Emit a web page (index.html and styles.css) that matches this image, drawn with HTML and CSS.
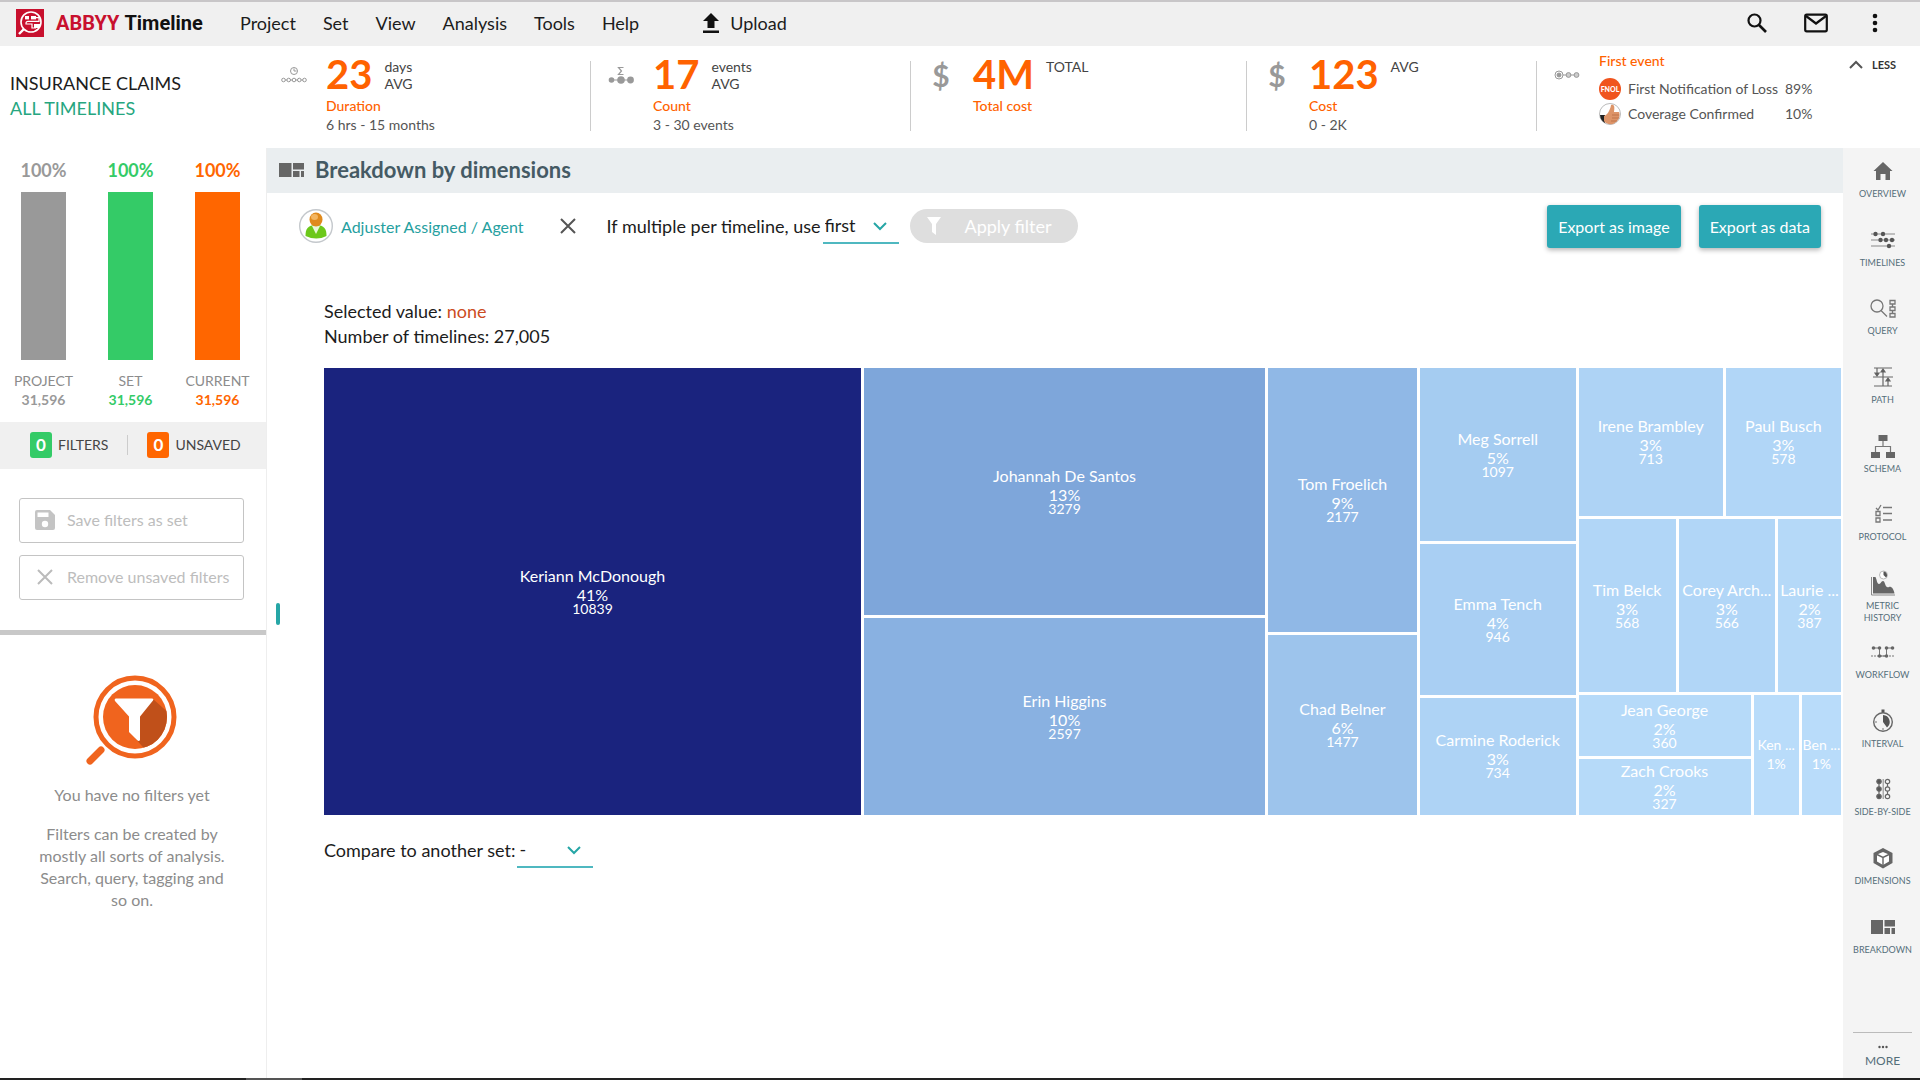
FILE: index.html
```html
<!DOCTYPE html>
<html lang="en">
<head>
<meta charset="utf-8">
<title>ABBYY Timeline</title>
<link rel="stylesheet" href="styles.css">
</head>
<body>
<div class="app">
  <header class="topbar">
    <a class="brand" href="#">
      <svg class="brand-mark" viewBox="0 0 28 28" aria-hidden="true"><rect width="28" height="28" fill="#c8102e"/><circle cx="15" cy="13" r="10" fill="none" stroke="#fff" stroke-width="1.6"/><path d="M8 20l-5 5" stroke="#fff" stroke-width="2.4"/><rect x="9" y="7" width="4" height="3.4" fill="#fff"/><rect x="15" y="7" width="5" height="3.4" fill="#fff"/><rect x="18" y="15" width="6" height="4" fill="#fff"/><path d="M20 8.700h3v3.600h-11q-2 0-2 2v.7h6v4h4" fill="none" stroke="#fff" stroke-width="1.200"/></svg>
      <span class="brand-name">ABBYY</span><span class="brand-product">Timeline</span>
    </a>
    <nav class="menu">
      <a href="#">Project</a><a href="#">Set</a><a href="#">View</a><a href="#">Analysis</a><a href="#">Tools</a><a href="#">Help</a>
    </nav>
    <button class="upload" type="button">
      <svg viewBox="0 0 16 20" width="16" height="20" aria-hidden="true"><path d="M8 0l8 8h-4.500v7h-7V8H0zM0 17.500h16V20H0z" fill="#111"/></svg>
      Upload
    </button>
    <div class="tools">
      <button type="button" aria-label="Search"><svg viewBox="0 0 20 20" width="20" height="20"><circle cx="7.500" cy="7.500" r="6" fill="none" stroke="#111" stroke-width="2.200"/><path d="M12 12l7 7" stroke="#111" stroke-width="2.600"/></svg></button>
      <button type="button" aria-label="Messages"><svg viewBox="0 0 24 20" width="24" height="20"><rect x="1.200" y="1.700" width="21.600" height="16.600" rx="1.500" fill="none" stroke="#111" stroke-width="2.200"/><path d="M2 3l10 7.500L22 3" fill="none" stroke="#111" stroke-width="2.200"/></svg></button>
      <button type="button" aria-label="More options"><svg viewBox="0 0 20 20" width="20" height="20" fill="#111"><circle cx="10" cy="3" r="2.300"/><circle cx="10" cy="10" r="2.300"/><circle cx="10" cy="17" r="2.300"/></svg></button>
    </div>
  </header>

  <section class="summary">
    <div class="scope">
      <div class="scope-project">INSURANCE CLAIMS</div>
      <a class="scope-set" href="#">ALL TIMELINES</a>
    </div>
    <div class="kpi">
      <svg class="kpi-icon" viewBox="0 0 28 28" aria-hidden="true" fill="none" stroke="#999"><circle cx="14" cy="10" r="3.500"/><path d="M14 7.500V10h2.500"/><path d="M2 19h24"/><g fill="#fff"><circle cx="3.500" cy="19" r="1.800"/><circle cx="8.700" cy="19" r="1.800"/><circle cx="14" cy="19" r="1.800"/><circle cx="19.300" cy="19" r="1.800"/><circle cx="24.500" cy="19" r="1.800"/></g></svg>
      <div class="kpi-body">
        <div class="kpi-head"><span class="kpi-value">23</span><span class="kpi-unit">days<br>AVG</span></div>
        <div class="kpi-name">Duration</div>
        <div class="kpi-range">6 hrs - 15 months</div>
      </div>
    </div>
    <div class="kpi">
      <svg class="kpi-icon" viewBox="0 0 28 28" aria-hidden="true" fill="#999"><path d="M16.500 6.500h-5l3 3.500-3 3.500h5" fill="none" stroke="#999" stroke-width="1.200"/><path d="M3 19h22" stroke="#999"/><circle cx="4.500" cy="19" r="2.800"/><circle cx="14" cy="19" r="3.800"/><circle cx="23.500" cy="19" r="3.400"/></svg>
      <div class="kpi-body">
        <div class="kpi-head"><span class="kpi-value">17</span><span class="kpi-unit">events<br>AVG</span></div>
        <div class="kpi-name">Count</div>
        <div class="kpi-range">3 - 30 events</div>
      </div>
    </div>
    <div class="kpi">
      <span class="kpi-icon kpi-dollar">$</span>
      <div class="kpi-body">
        <div class="kpi-head"><span class="kpi-value">4M</span><span class="kpi-unit">TOTAL</span></div>
        <div class="kpi-name">Total cost</div>
      </div>
    </div>
    <div class="kpi">
      <span class="kpi-icon kpi-dollar">$</span>
      <div class="kpi-body">
        <div class="kpi-head"><span class="kpi-value">123</span><span class="kpi-unit">AVG</span></div>
        <div class="kpi-name">Cost</div>
        <div class="kpi-range">0 - 2K</div>
      </div>
    </div>
    <div class="kpi kpi-events">
      <svg class="kpi-icon" viewBox="0 0 28 28" aria-hidden="true" fill="#999" stroke="#999"><circle cx="6" cy="18" r="4" fill="none"/><circle cx="6" cy="18" r="2"/><path d="M10 18h15"/><circle cx="15.500" cy="18" r="2.400" fill="#ccc"/><circle cx="23.500" cy="18" r="2.400" fill="#ccc"/></svg>
      <div class="kpi-body">
        <div class="kpi-name">First event</div>
        <div class="event"><span class="event-badge">FNOL</span><span class="event-name">First Notification of Loss</span><span>89%</span></div>
        <div class="event"><svg class="event-pic" viewBox="0 0 22 22" aria-hidden="true"><circle cx="11" cy="11" r="10.500" fill="#fff" stroke="#bbb"/><path d="M1 12h5v8A10 10 0 0 1 1 12z" fill="#222"/><path d="M5 13c3-1 6-5 7-11 3-1 4 1 3 7h5c2 4-1 10-6 12-4 1-8-1-9-3z" fill="#dd9468"/><path d="M13 12h7M13 15h7M12 18h6" stroke="#b96c44" stroke-width=".8"/></svg><span class="event-name">Coverage Confirmed</span><span>10%</span></div>
      </div>
    </div>
    <button class="less" type="button"><svg viewBox="0 0 14 9" width="14" height="9" aria-hidden="true"><path d="M1 8l6-6 6 6" fill="none" stroke="#555" stroke-width="2"/></svg>LESS</button>
  </section>

  <div class="body">
    <aside class="sidebar">
      <div class="bars">
        <div class="bar bar-project"><b class="bar-pct">100%</b><i class="bar-fill"></i><span>PROJECT</span><b>31,596</b></div>
        <div class="bar bar-set"><b class="bar-pct">100%</b><i class="bar-fill"></i><span>SET</span><b>31,596</b></div>
        <div class="bar bar-current"><b class="bar-pct">100%</b><i class="bar-fill"></i><span>CURRENT</span><b>31,596</b></div>
      </div>
      <div class="counts">
        <div class="count"><b class="count-badge green">0</b>FILTERS</div>
        <div class="count"><b class="count-badge orange">0</b>UNSAVED</div>
      </div>
      <div class="actions">
        <button type="button" disabled><svg viewBox="0 0 20 20" width="20" height="20" aria-hidden="true"><path d="M2 0h13l5 5v13a2 2 0 0 1-2 2H2a2 2 0 0 1-2-2V2a2 2 0 0 1 2-2z" fill="#c4c4c4"/><path d="M2.500 2.500h11v4.500h-11z" fill="#fff"/><circle cx="10" cy="14" r="3.200" fill="#fff"/></svg>Save filters as set</button>
        <button type="button" disabled><svg viewBox="0 0 20 20" width="20" height="20" aria-hidden="true"><path d="M3 3l14 14M17 3L3 17" stroke="#bbb" stroke-width="2"/></svg>Remove unsaved filters</button>
      </div>
      <div class="empty">
        <svg viewBox="0 0 92 92" width="92" height="92" aria-hidden="true"><defs><clipPath id="lens"><circle cx="49" cy="42" r="32"/></clipPath></defs><circle cx="49" cy="42" r="39" fill="#fff" stroke="#f0641e" stroke-width="5"/><circle cx="49" cy="42" r="32" fill="#f0641e"/><path clip-path="url(#lens)" d="M67 24l20 18v36H62L49 63l5-21z" fill="#c0501a"/><path d="M30 23.500h36q2 0 1 2L54 41.500V65q-1 2-3 0l-8-8V41.500L29 26q-1-2.500 1-2.500z" fill="#fff"/><path d="M15 75L4 86" stroke="#f0641e" stroke-width="7" stroke-linecap="round"/></svg>
        <p>You have no filters yet</p>
        <p>Filters can be created by mostly all sorts of analysis. Search, query, tagging and so on.</p>
      </div>
      <div class="splitter"></div>
    </aside>

    <main class="main">
      <div class="titlebar">
        <svg viewBox="0 0 25 14" width="25" height="14" fill="#666" aria-hidden="true"><path d="M0 0h12.500v14H0zM14 0h11v6.500H14zM14 8h6.500v6H14zM22 8h3v6h-3z"/></svg>
        <h1>Breakdown by dimensions</h1>
      </div>
      <div class="toolbar">
        <a class="dimension" href="#">
          <svg viewBox="0 0 34 34" width="34" height="34" aria-hidden="true"><circle cx="17" cy="17" r="16.300" fill="#fff" stroke="#c4c8cc" stroke-width="1.400"/><path d="M6.500 27c0-7 2-11 10.500-11s10.500 4 10.500 11q-10 5-21 0z" fill="#6cc81a"/><path d="M13 17l4 8 4-8z" fill="#e9f7d8"/><ellipse cx="17" cy="10.500" rx="6.500" ry="7" fill="#e08a1c"/><ellipse cx="15.500" cy="8" rx="3.500" ry="3" fill="#f3b560"/></svg>
          Adjuster Assigned / Agent
        </a>
        <button class="clear" type="button" aria-label="Remove dimension"><svg viewBox="0 0 16 16" width="16" height="16"><path d="M1 1l14 14M15 1L1 15" stroke="#555" stroke-width="2"/></svg></button>
        <label for="multi">If multiple per timeline, use</label>
        <span class="select"><select id="multi"><option>first</option><option>last</option></select><svg viewBox="0 0 14 9" width="14" height="9" aria-hidden="true"><path d="M1 1l6 6 6-6" fill="none" stroke="#26a6a6" stroke-width="2"/></svg></span>
        <button class="apply" type="button" disabled><svg viewBox="0 0 14 18" width="14" height="18" aria-hidden="true"><path d="M0 0h14L9 7v11l-4-3V7z" fill="#fff"/></svg>Apply filter</button>
        <div class="exports"><button type="button">Export as image</button><button type="button">Export as data</button></div>
      </div>
      <div class="content">
        <div class="info">Selected value: <span class="none">none</span><br>Number of timelines: 27,005</div>
        <div class="treemap">
          <div class="tile" style="flex-grow:538;background:#1a237e"><span>Keriann McDonough</span><b>41%</b><small>10839</small></div>
          <div class="col" style="flex-grow:402">
            <div class="tile" style="flex-grow:248;background:#7ea6da"><span>Johannah De Santos</span><b>13%</b><small>3279</small></div>
            <div class="tile" style="flex-grow:196;background:#89b1e1"><span>Erin Higgins</span><b>10%</b><small>2597</small></div>
          </div>
          <div class="col" style="flex-grow:149">
            <div class="tile" style="flex-grow:265;background:#90b8e6"><span>Tom Froelich</span><b>9%</b><small>2177</small></div>
            <div class="tile" style="flex-grow:179;background:#9dc4ec"><span>Chad Belner</span><b>6%</b><small>1477</small></div>
          </div>
          <div class="col" style="flex-grow:156">
            <div class="tile" style="flex-grow:174;background:#a5ccf1"><span>Meg Sorrell</span><b>5%</b><small>1097</small></div>
            <div class="tile" style="flex-grow:150;background:#a9cff3"><span>Emma Tench</span><b>4%</b><small>946</small></div>
            <div class="tile" style="flex-grow:116;background:#aed3f5"><span>Carmine Roderick</span><b>3%</b><small>734</small></div>
          </div>
          <div class="col" style="flex-grow:263">
            <div class="row" style="flex-grow:148">
              <div class="tile" style="flex-grow:144;background:#aed3f5"><span>Irene Brambley</span><b>3%</b><small>713</small></div>
              <div class="tile" style="flex-grow:115;background:#b1d6f7"><span>Paul Busch</span><b>3%</b><small>578</small></div>
            </div>
            <div class="row" style="flex-grow:173">
              <div class="tile" style="flex-grow:97;background:#b1d6f7"><span>Tim Belck</span><b>3%</b><small>568</small></div>
              <div class="tile" style="flex-grow:96;background:#b1d6f7"><span>Corey Arch...</span><b>3%</b><small>566</small></div>
              <div class="tile" style="flex-grow:63;background:#b5d9f8"><span>Laurie ...</span><b>2%</b><small>387</small></div>
            </div>
            <div class="row" style="flex-grow:120">
              <div class="col" style="flex-grow:171">
                <div class="tile" style="flex-grow:61;background:#b6daf9"><span>Jean George</span><b>2%</b><small>360</small></div>
                <div class="tile" style="flex-grow:55;background:#b6daf9"><span>Zach Crooks</span><b>2%</b><small>327</small></div>
              </div>
              <div class="tile tiny" style="flex-grow:45;background:#b9dcfa"><span>Ken ...</span><b>1%</b></div>
              <div class="tile tiny" style="flex-grow:39;background:#b9dcfa"><span>Ben ...</span><b>1%</b></div>
            </div>
          </div>
        </div>
        <div class="compare">
          <label for="other">Compare to another set:</label>
          <span class="select"><select id="other"><option>-</option></select><svg viewBox="0 0 14 9" width="14" height="9" aria-hidden="true"><path d="M1 1l6 6 6-6" fill="none" stroke="#26a6a6" stroke-width="2"/></svg></span>
        </div>
      </div>
    </main>

    <nav class="rail">
      <div class="rail-list">
        <a href="#"><svg viewBox="0 0 26 26"><path d="M13 4L3.500 13H6v9h4.500v-6h5v6H20v-9h2.500z" fill="#666"/></svg>OVERVIEW</a>
        <a href="#"><svg viewBox="0 0 26 26"><path d="M1 7h24M1 13h24M1 19h24" stroke="#888"/><g fill="#555"><circle cx="5.500" cy="7" r="2.200"/><circle cx="13" cy="7" r="2.200"/><circle cx="10.500" cy="13" r="2.200"/><circle cx="16" cy="13" r="2.200"/><circle cx="22" cy="13" r="2.200"/><circle cx="19" cy="19" r="2.200"/></g></svg>TIMELINES</a>
        <a href="#"><svg viewBox="0 0 26 26" fill="none" stroke="#777" stroke-width="1.300"><circle cx="7" cy="11" r="6"/><path d="M11 15.500l6 6"/><path d="M20 5.500h5v3.500h-5zM20 12h5v3.500h-5zM20 18.500h5v3.500h-5zM22.500 9v3M22.500 15.500v3"/></svg>QUERY</a>
        <a href="#"><svg viewBox="0 0 26 26" fill="none" stroke="#666" stroke-width="1.200"><path d="M4 4h18M3 13h20M4 22h18M7 4v7M13 6v16M18 15v7"/><path d="M5 9h4l-2 3zM11 8h4l-2-3zM16 17h4l-2-3z" fill="#555"/></svg>PATH</a>
        <a href="#"><svg viewBox="0 0 26 26"><path d="M8.500 2h9v6h-9zM1 19h9v6H1zM16 19h9v6h-9z" fill="#666"/><path d="M13 8v5.500M5.500 19v-5.500h15V19" fill="none" stroke="#777" stroke-width="1.200"/></svg>SCHEMA</a>
        <a href="#"><svg viewBox="0 0 26 26" fill="none" stroke="#777" stroke-width="1.300"><path d="M6 7l2 2 3-5M13 6.500h9M13 12.500h9M13 19h9M6 10.500h4v4H6zM6 17h4v4H6z"/></svg>PROTOCOL</a>
        <a href="#"><svg viewBox="0 0 26 26"><path d="M1.500 7v18H25" fill="none" stroke="#888"/><path d="M3 7h2.500c1.500 3 1.500 7 3.500 7s2-3 4-3 2 5 4 6 2-1 4 0 3 4 3.500 6.500H3z" fill="#666"/><circle cx="13.500" cy="5" r="4" fill="#fff" stroke="#bbb"/><path d="M13.500 1.500V5l2.500 2.500a3.500 3.500 0 0 0-2.500-6z" fill="#555"/></svg>METRIC<br>HISTORY</a>
        <a href="#"><svg viewBox="0 0 26 26" fill="#666"><path d="M3 9h7M16 9h7M9.500 9v8M16.500 9v8M9.500 17h7" fill="none" stroke="#777"/><path d="M1 17h24" stroke="#777" stroke-dasharray="2 1"/><circle cx="3.500" cy="9" r="1.800"/><circle cx="9.500" cy="9" r="1.800"/><circle cx="16.500" cy="9" r="1.800"/><circle cx="22.500" cy="9" r="1.800"/><circle cx="9.500" cy="17" r="1.800"/><circle cx="16.500" cy="17" r="1.800"/></svg>WORKFLOW</a>
        <a href="#"><svg viewBox="0 0 26 26"><circle cx="13" cy="14" r="9.300" fill="none" stroke="#666" stroke-width="1.400"/><path d="M13 7v7l4 5.500a7 7 0 0 0-4-12.500z" fill="#555"/><path d="M11.500 1.500h3v3h-3z" fill="#555"/><path d="M5 14h2M13 20v2" stroke="#777"/></svg>INTERVAL</a>
        <a href="#"><svg viewBox="0 0 26 26" fill="none" stroke="#666" stroke-width="1.200"><path d="M9 5v15M17.500 5v15"/><path d="M13.200 3v20" stroke="#999"/><g fill="#555"><circle cx="9" cy="5.500" r="2.200"/><circle cx="9" cy="13" r="2.200"/><circle cx="9" cy="20.500" r="2.200"/></g><g fill="#f4f4f4"><circle cx="17.500" cy="5.500" r="2.200"/><circle cx="17.500" cy="13" r="2.200"/><circle cx="17.500" cy="20.500" r="2.200"/></g></svg>SIDE-BY-SIDE</a>
        <a href="#"><svg viewBox="0 0 26 26"><path d="M13 3l9.500 5v10L13 23.500 3.500 18V8z" fill="#666"/><path d="M13 7l6 2.500v7L13 20l-6-3.500v-7z" fill="#fff"/><path d="M7 9.500l6 3 6-3M13 12.500V20" fill="none" stroke="#666" stroke-width="1.400"/></svg>DIMENSIONS</a>
        <a href="#"><svg viewBox="0 0 26 26" fill="#666"><path d="M1 6h12v14H1zM14.500 6H25v6.500H14.500zM14.500 14H20v6h-5.500zM21.500 14H25v6h-3.500z"/></svg>BREAKDOWN</a>
      </div>
      <a class="rail-more" href="#"><svg viewBox="0 0 10 4" width="10" height="4" fill="#555"><circle cx="1.500" cy="2" r="1.200"/><circle cx="5" cy="2" r="1.200"/><circle cx="8.500" cy="2" r="1.200"/></svg>MORE</a>
    </nav>
  </div>
  <div class="edge"><i></i></div>
</div>
</body>
</html>
```
FILE: styles.css
```css
* { box-sizing: border-box; }
body { margin: 0; font-family: Lato, "Open Sans", sans-serif; font-size: 18px; color: #1c1c1c; background: #fff; }
a { color: inherit; text-decoration: none; }
button { font: inherit; color: inherit; border: 0; background: none; padding: 0; cursor: pointer; display: flex; align-items: center; }
svg { display: block; flex: none; }

.app { min-height: 100vh; display: flex; flex-direction: column; }

/* top bar */
.topbar { height: 46px; flex: none; display: flex; align-items: center; padding: 0 35px 2px 16px; background: #f0f0f0; border-top: 2px solid #c8c6c8; }
.brand { display: flex; align-items: center; width: 224px; font: bold 20px Roboto, "Liberation Sans", sans-serif; }
.brand-mark { width: 28px; height: 28px; margin-right: 12px; }
.brand-name { color: #c8102e; margin-right: 5px; }
.brand-product { color: #111; }
.menu { display: flex; gap: 27px; }
.upload { margin-left: 64px; gap: 11px; }
.tools { margin-left: auto; display: flex; gap: 37px; }

/* summary strip */
.summary { height: 102px; flex: none; display: grid; grid-template-columns: 264px 327fr 320fr 336fr 290fr 284fr 99px; }
.scope { padding: 25px 0 0 10px; line-height: 25px; }
.scope-set { color: #26a680; }
.kpi { position: relative; display: flex; gap: 18px; padding: 10px 0 0 16px; }
.kpi:not(.kpi-events)::after { content: ""; position: absolute; right: 0; top: 15px; height: 70px; border-right: 1px solid #ccc; }
.kpi-icon { width: 28px; height: 28px; flex: none; margin-top: 5px; }
.kpi-dollar { font-size: 30px; line-height: 28px; color: #999; font-weight: bold; text-align: center; }
.kpi-head { display: flex; gap: 12px; height: 41px; }
.kpi-value { font-size: 40px; line-height: 36px; font-weight: bold; color: #ff6200; }
.kpi-unit { font-size: 14px; line-height: 17px; color: #444; padding-top: 2px; }
.kpi-name { font-size: 14px; line-height: 18px; color: #ff6200; font-weight: 500; }
.kpi-range { font-size: 14px; line-height: 20px; color: #555; }
.kpi-events { padding-top: 6px; }
.kpi-events .kpi-name { margin-bottom: 6px; }
.event { display: flex; align-items: center; font-size: 14px; line-height: 25px; color: #555; }
.event-name { width: 157px; white-space: nowrap; }
.event-badge, .event-pic { width: 22px; height: 22px; margin-right: 7px; flex: none; }
.event-badge { border-radius: 50%; background: #f0541e; color: #fff; font-size: 7px; font-weight: 900; line-height: 22px; text-align: center; }
.less { align-self: start; gap: 9px; padding: 10px 0 0 28px; font-size: 11px; line-height: 17px; font-weight: bold; color: #333; }

.body { flex: 1; display: grid; grid-template-columns: 267px minmax(0, 1fr) 77px; }

/* sidebar */
.sidebar { position: relative; border-right: 1px solid #eee; }
.bars { display: grid; grid-template-columns: repeat(3, 87px); height: 274px; padding-top: 10px; }
.bar { display: flex; flex-direction: column; align-items: center; font-size: 14px; line-height: 19px; }
.bar-pct { font-size: 18px; line-height: 24px; margin-bottom: 10px; }
.bar-fill { width: 45px; height: 168px; margin-bottom: 11px; background: currentColor; }
.bar-project { color: #999; }
.bar span { color: #8c8c8c; }
.bar-set { color: #34cb67; }
.bar-current { color: #ff6600; }
.counts { display: flex; align-items: center; height: 47px; background: #f0f0f0; padding: 0 0 2px 30px; font-size: 14px; color: #444; }
.count { display: flex; align-items: center; gap: 6px; }
.count + .count { margin-left: 19px; padding-left: 20px; position: relative; }
.count + .count::before { content: ""; position: absolute; left: 0; top: 3px; height: 20px; border-left: 1px solid #ccc; }
.count-badge { width: 22px; height: 26px; border-radius: 3px; color: #fff; font-size: 17px; line-height: 26px; text-align: center; }
.green { background: #34cb67; }
.orange { background: #ff6600; }
.actions { display: grid; gap: 12px; padding: 29px 22px 30px 19px; border-bottom: 5px solid #c8c8c8; }
.actions button { height: 45px; border: 1px solid #c4c4c4; border-radius: 3px; gap: 12px; padding: 0 0 2px 15px; font-size: 16px; color: #bdbdbd; }
.empty { padding: 40px 38px 0 36px; display: flex; flex-direction: column; align-items: center; text-align: center; font-size: 16px; line-height: 22px; color: #8c8c8c; }
.empty p { margin: 17px 0 0; }
.splitter { position: absolute; right: -14px; top: 455px; width: 4px; height: 22px; border-radius: 2px; background: #26a6a6; }

/* main panel */
.titlebar { height: 45px; display: flex; align-items: center; gap: 11px; padding: 0 0 2px 12px; background: #eaeef0; }
.titlebar h1 { margin: 0; font-size: 22px; font-weight: bold; color: #455a64; }
.toolbar { display: flex; align-items: center; height: 66px; padding: 0 22px 0 32px; }
.dimension { display: flex; align-items: center; gap: 8px; font-size: 16px; color: #26a0a0; }
.clear { margin: 0 31px 0 36px; }
.select { position: relative; display: inline-flex; margin-left: 2px; }
.select select { width: 76px; height: 36px; padding: 0 2px; font: inherit; color: inherit; appearance: none; border: 0; border-bottom: 2px solid #4fb8c0; border-radius: 0; background: none; }
.select svg { position: absolute; right: 12px; top: 14px; pointer-events: none; }
.apply { height: 34px; width: 168px; margin-left: 11px; padding-left: 17px; gap: 24px; border-radius: 17px; background: #dedede; color: #fff; }
.exports { margin-left: auto; display: flex; gap: 18px; }
.exports button { height: 43px; padding: 0 11px; font-size: 16px; color: #fff; background: #2ba8b5; border-radius: 3px; box-shadow: 0 2px 5px rgba(0, 0, 0, .3); }
.content { padding: 40px 2px 0 57px; }
.info { line-height: 25px; margin-bottom: 19px; }
.none { color: #cc4c22; }
.treemap, .row { display: flex; gap: 3px; }
.treemap { height: 447px; }
.col { display: flex; flex-direction: column; gap: 3px; }
.treemap > *, .row, .row > *, .col > * { flex-basis: 0; min-width: 0; min-height: 0; }
.tile { display: flex; flex-direction: column; align-items: center; justify-content: center; padding-bottom: 5px; color: #fff; font-size: 16px; overflow: hidden; white-space: nowrap; }
.tile span { line-height: 23px; }
.tile b { font-weight: 400; line-height: 16px; }
.tile small { font-size: 14px; line-height: 12px; }
.tiny { font-size: 14px; }
.compare { display: flex; align-items: center; margin-top: 17px; }

/* right navigation rail */
.rail { display: flex; flex-direction: column; background: #f4f4f4; padding: 0 8px 0 10px; font-size: 9px; line-height: 12px; color: #546e7a; text-align: center; }
.rail-list { flex: 895 1 0; display: grid; grid-template-columns: minmax(0, 1fr); grid-auto-rows: 1fr; }
.rail-list a { padding-top: 10px; white-space: nowrap; }
.rail-list svg { width: 26px; height: 26px; margin: 0 auto 4px; }
.rail-more { flex: 105 1 0; display: flex; flex-direction: column; align-items: center; justify-content: flex-end; gap: 4px; padding-bottom: 9px; font-size: 12px; line-height: 16px; }
.rail-more::before { content: ""; align-self: stretch; border-top: 1px solid #bbb; margin-bottom: 8px; }

.edge { height: 2px; flex: none; background: #222; }
.edge i { display: block; width: 56px; height: 2px; margin-left: 246px; background: #555; }
```
